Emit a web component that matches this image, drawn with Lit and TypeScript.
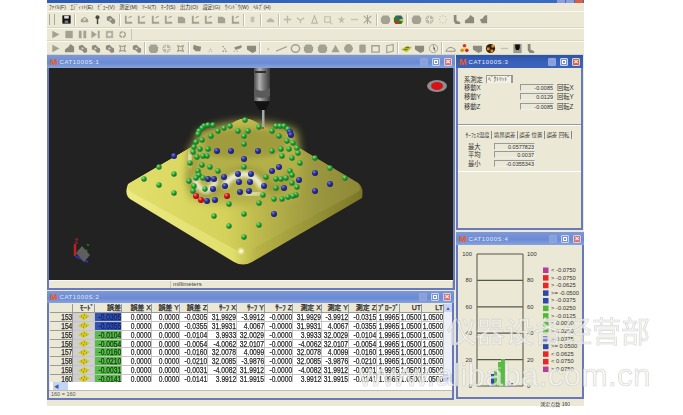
import { LitElement, html, css, svg, unsafeCSS } from "lit";
import { customElement } from "lit/decorators.js";

const UI = unsafeCSS(`"Liberation Sans", "Noto Sans CJK JP", sans-serif`);

const G = "#a3a191";
function icon(kind: string) {
  let s;
  switch (kind) {
    case "save": s = svg`<rect x="1.500" y="1.500" width="9" height="9" fill="#111"/><rect x="3.500" y="2" width="5" height="3" fill="#ddd"/><rect x="4" y="7" width="4" height="3" fill="#777"/>`; break;
    case "print": s = svg`<path d="M2 6l4-3 4 3v3H2z" fill="${G}"/><circle cx="6" cy="6" r="1.600" fill="#d8d6c8"/>`; break;
    case "key": s = svg`<circle cx="6" cy="3.500" r="2.200" fill="#4a4a40"/><rect x="5.200" y="5" width="1.600" height="6" fill="#4a4a40"/>`; break;
    case "tools": s = svg`<path d="M2 3l4-1 3 3 2 1v4l-3 1-3-3-3-1z" fill="#8e8c80"/><circle cx="6" cy="6" r="1.200" fill="#d8d6c8"/>`; break;
    case "L": s = svg`<path d="M3 2v7.500h7" fill="none" stroke="${G}" stroke-width="2"/><path d="M6 4l3.500-1.500" stroke="${G}" stroke-width="1.200"/>`; break;
    case "Lf": s = svg`<path d="M2 3h5l3 2v5H2z" fill="${G}"/>`; break;
    case "small": s = svg`<path d="M4 3h4v6H4z" fill="#c4c2b2"/>`; break;
    case "roof": s = svg`<path d="M2 7l4-3 4 3v2H2z" fill="#bab8a8"/>`; break;
    case "cross": s = svg`<path d="M6 2v8M2 6h8" stroke="#bab8a8" stroke-width="1.500"/>`; break;
    case "vee": s = svg`<path d="M2 4l4 3 4-3M6 7v3" stroke="#bab8a8" stroke-width="1.300" fill="none"/>`; break;
    case "tri": s = svg`<path d="M6 2l3 8H3z" fill="none" stroke="#bab8a8" stroke-width="1.300"/>`; break;
    case "sq": s = svg`<path d="M3 3h6v6H3z M8 8l3 3" fill="none" stroke="#c0beae" stroke-width="1.300"/>`; break;
    case "star": s = svg`<path d="M6 2l1 3h3l-2.500 2 1 3L6 8.500 3.500 10l1-3L2 5h3z" fill="#c0beae"/>`; break;
    case "dash": s = svg`<path d="M2 6h8" stroke="#c4c2b2" stroke-width="1.500"/>`; break;
    case "spark": s = svg`<path d="M2 2l8 8M10 2l-8 8M6 1v10" stroke="${G}" stroke-width="1.100"/>`; break;
    case "blob": s = svg`<path d="M3 1.500h6l2 3v4l-2 2.500H3L1 8.500v-4z" fill="${G}"/>`; break;
    case "cube": s = svg`<path d="M3 1.500h6l2 3v4l-2 2.500H3L1 8.500v-4z" fill="#2a7a30"/><path d="M6 1.500l5 3-5 2z" fill="#3050b0"/><path d="M1 8.500l5-2v4.500H3z" fill="#c03030"/><path d="M6 6.500l5-2v4z" fill="#d8c020"/>`; break;
    case "net": s = svg`<circle cx="6" cy="6" r="4.500" fill="#bab8a8"/><path d="M2 6h8M6 1.500v9M3 3l6 6" stroke="#ece9d8"/>`; break;
    case "dots": s = svg`<path d="M3 3h.8M6 2h.8M9 3h.8M2 6h.8M10 6h.8M3 9h.8M6 10h.8M9 9h.8" stroke="${G}"/>`; break;
    case "probe": s = svg`<path d="M3 1h3v6l4 2v2H5L3 8z" fill="#8c8a7c"/>`; break;
    case "mass": s = svg`<path d="M1 7l4-3 2-3 4 3v6H1z" fill="#8c8a7c"/>`; break;
    case "bird": s = svg`<path d="M2 6l3-1 2-3 3-1v9H4z" fill="#8c8a7c"/>`; break;
    case "play": s = svg`<path d="M2.500 2l8 4-8 4z" fill="${G}"/>`; break;
    case "stop": s = svg`<rect x="1.500" y="2" width="8" height="8" fill="${G}"/>`; break;
    case "pause": s = svg`<path d="M2 2h3v8H2zM7 2h3v8H7z" fill="${G}"/>`; break;
    case "next": s = svg`<path d="M1.500 2l6 4-6 4zM8.500 2h2v8h-2z" fill="${G}"/>`; break;
    case "disc": s = svg`<rect x="2" y="2" width="8" height="8" fill="#b4b2a2"/><circle cx="6" cy="6" r="2" fill="#ece9d8"/>`; break;
    case "ring": s = svg`<circle cx="6" cy="6" r="3" fill="none" stroke="${G}" stroke-width="1.500" stroke-dasharray="4 1"/>`; break;
    case "pts": s = svg`<path d="M3 3l3 1 3-1-1 3 1 3-3-1-3 1 1-3z" fill="none" stroke="${G}" stroke-width="1.300"/>`; break;
    case "wave": s = svg`<path d="M2 2l3 1 5 1-1 5H4l-3-3z" fill="#8c8a7c"/>`; break;
    case "wee": s = svg`<path d="M4 9h.8M7 9h.8M5.500 7h.8" stroke="#8c8a7c" stroke-width="1.200"/>`; break;
    case "wee2": s = svg`<path d="M4 4h1M4 9h1M7 9h1M6 6.500h1" stroke="#6c6a5c" stroke-width="1.400"/>`; break;
    case "wee3": s = svg`<path d="M2 9h1M5 9h1M3 5l7-2v2l-6 2z" fill="#8c8a7c" stroke="#8c8a7c"/>`; break;
    case "flag": s = svg`<path d="M1 3h10v6l-4 2-6-4z" fill="#8c8a7c"/>`; break;
    case "dot": s = svg`<rect x="5" y="6" width="1.500" height="1.500" fill="${G}"/>`; break;
    case "line": s = svg`<path d="M0 9L12 4" stroke="${G}" stroke-width="1.300"/>`; break;
    case "circ": s = svg`<ellipse cx="6" cy="6" rx="4.500" ry="4" fill="none" stroke="${G}" stroke-width="1.600"/>`; break;
    case "cone": s = svg`<path d="M6 2l4.500 8h-9z" fill="${G}"/>`; break;
    case "ball": s = svg`<circle cx="6" cy="6" r="4.800" fill="${G}"/>`; break;
    case "can": s = svg`<rect x="2.500" y="1.500" width="7" height="9" rx="1.500" fill="${G}"/>`; break;
    case "box": s = svg`<path d="M2 3h8v7H2z" fill="none" stroke="${G}" stroke-width="1.500"/>`; break;
    case "skew": s = svg`<path d="M3 3l7-1.500v7.500l-7 1.500z" fill="none" stroke="${G}" stroke-width="1.300"/>`; break;
    case "yel": s = svg`<path d="M0 7l7-4 5 2-6 5z" fill="#c4c030"/><path d="M3 7h4M5 5h4" stroke="#4a6a20"/>`; break;
    case "clock": s = svg`<circle cx="6" cy="6" r="4.500" fill="none" stroke="${G}"/><path d="M6 2v4l2 3" stroke="${G}"/>`; break;
    case "arc": s = svg`<path d="M1 9c2-5 6-5 10-2v2z" fill="none" stroke="#8c8a7c"/>`; break;
    case "fl": s = svg`<circle cx="6" cy="3" r="2" fill="#d83818"/><circle cx="3.500" cy="8" r="2" fill="#d89018"/><circle cx="8.500" cy="8" r="2" fill="#c83018"/><circle cx="6" cy="6" r="1.300" fill="#e8d040"/>`; break;
    case "chess": s = svg`<circle cx="6" cy="6" r="5" fill="#2a1c10"/><path d="M2 5h3v3H2zM7 2h3v3H7zM6 7h3v3H6z" fill="#e08a20"/>`; break;
    case "black": s = svg`<rect x="1.500" y="1" width="9" height="10" fill="#9a9888"/><path d="M3.500 1.500h5v4l-1 2h-3l-1-2z" fill="#111"/>`; break;
    default: s = svg``;
  }
  return html`<svg class="ic" viewBox="0 0 12 12">${s}</svg>`;
}

const ROW1 = "save | print key tools | L L L L Lf L L Lf L | small | roof | cross vee tri sq star dash spark | blob cube | blob net dots probe mass bird".split(" ");
const ROW2 = "play stop pause next disc ring".split(" ");
const ROW3 = "play mass tools tools tools pts tools | blob net pts | wave wee wee2 wee3 flag | dot line circ blob blob cone ball can box skew | yel flag clock | arc fl flag chess dash black probe".split(" ");

const MENU = ["ﾌｧｲﾙ(F)", "ｴﾃﾞｨｯﾄ(E)", "ﾋﾞｭｰ(V)", "測定(M)", "ﾂｰﾙ(T)", "ﾏｰｸ(S)", "出力(O)", "設定(G)", "ｳｲﾝﾄﾞｳ(W)", "ﾍﾙﾌﾟ(H)"];

const HEAD = ["", "ﾓｰﾄﾞ", "誤差", "誤差 X", "誤差 Y", "誤差 Z", "ｻｰﾌ X", "ｻｰﾌ Y", "ｻｰﾌ Z", "測定 X", "測定 Y", "測定 Z", "ﾌﾟﾛｰﾌﾞ", "UT", "LT"];
const ROWS: string[][] = [
  ["153", "-0.0305", "31.9929", "-3.9912"],
  ["154", "-0.0355", "31.9931", "4.0067"],
  ["155", "-0.0104", "3.9933", "32.0029"],
  ["156", "-0.0054", "-4.0062", "32.0107"],
  ["157", "-0.0160", "32.0078", "4.0099"],
  ["158", "-0.0210", "32.0085", "-3.9876"],
  ["159", "-0.0031", "-4.0082", "31.9912"],
  ["160", "-0.0141", "3.9912", "31.9915"],
];

const GREEN: number[][] = [[245,120],[204,126],[208,125],[213,125],[202,128],[199,131],[198,134],[230,126],[224,128],[218,131],[211,136],[202,140],[196,142],[194,147],[193,152],[200,149],[208,149],[197,157],[207,156],[203,156],[190,163],[202,165],[210,167],[198,171],[218,171],[199,175],[196,178],[189,181],[203,178],[194,186],[193,191],[205,189],[159,167],[174,174],[144,179],[159,185],[174,193],[259,127],[238,131],[248,131],[272,131],[276,126],[280,126],[284,126],[288,129],[279,136],[244,136],[244,144],[287,141],[293,143],[289,149],[297,148],[281,149],[272,151],[298,153],[282,156],[292,158],[300,163],[315,158],[330,168],[290,171],[292,175],[286,178],[281,179],[276,179],[266,177],[244,167],[292,183],[297,187],[276,188],[296,195],[293,196],[288,197],[282,199],[274,199],[263,195],[259,203],[229,204],[214,216],[244,214],[229,226],[259,225],[244,237],[345,178]];
const BLUE: number[][] = [[290,132],[291,135],[217,151],[231,151],[258,151],[174,156],[244,159],[279,167],[272,171],[315,173],[299,180],[330,184],[315,191],[208,179],[214,179],[224,177],[238,174],[251,174],[239,182],[250,182],[225,186],[213,189],[264,186],[284,188],[240,192],[249,191],[207,201],[215,200],[274,214]];
const RED: number[][] = [[196,196],[201,200],[227,196]];

const LEG: [string, string][] = [
  ["#b83c98", "< -0.0750"], ["#e82828", "> -0.0750"], ["#e82828", "> -0.0625"], ["#2c48a8", ">= -0.0500"],
  ["#2c48a8", "> -0.0375"], ["#50b838", "> -0.0250"], ["#50b838", "> -0.0125"], ["#50b838", "> 0.0000"],
  ["#50b838", "> 0.0250"], ["#7080c8", "> 0.0375"], ["#2c48a8", ">= 0.0500"], ["#e82828", "< 0.0625"],
  ["#e82828", "< 0.0750"], ["#b83c98", "> 0.0750"],
];

@customElement("app-root")
export class AppRoot extends LitElement {
  static styles = css`
    :host { display: block; width: 683px; height: 415px; background: #fff; overflow: hidden; position: relative; font-family: ${UI}; }
    .app { margin-left: 47px; width: 537px; height: 406px; background: #ebe8d6; display: flex; flex-direction: column; filter: blur(0.35px); position: relative; }
    .top { height: 3px; background: linear-gradient(90deg, #2c5cb4, #3a6cc8); flex: none; display: flex; justify-content: flex-end; gap: 1px; padding-right: 1px; }
    .top i { width: 8px; height: 3px; background: #8aa0dc; }
    .top i:last-child { background: #d86040; }
    .menu { height: 8px; box-sizing: border-box; flex: none; display: flex; gap: 4.500px; padding-left: 2px; font-size: 5.200px; line-height: 8px; color: #333; white-space: nowrap; }
    .tb { flex: none; box-sizing: border-box; display: flex; align-items: center; border-bottom: 1px solid #d8d5c2; border-top: 1px solid #faf8f0; }
    .tb1 { height: 17px; padding-left: 2px; }
    .tb2 { height: 13px; padding-left: 2px; }
    .tb3 { height: 14px; padding-left: 2px; }
    .grip { width: 4px; height: 11px; border-left: 1px solid #aaa898; border-right: 1px solid #aaa898; margin-right: 5px; flex: none; }
    .slot { width: 13.400px; flex: none; display: flex; justify-content: center; }
    .ic { width: 11px; height: 11px; display: block; }
    .sep { width: 0; height: 12px; border-left: 1px solid #c0bdaa; border-right: 1px solid #fff; margin: 0 1px 0 1px; flex: none; }
    .band2 { width: 82px; display: flex; align-items: center; border-right: 1px solid #c8c5b2; height: 100%; }
    .mdi { flex: 1; position: relative; }

    .win { position: absolute; box-sizing: border-box; border: 2px solid #6878bc; border-top: 0; display: flex; flex-direction: column; background: #ebe8d6; }
    .w1 { left: 0; top: 0; width: 408px; height: 235px; }
    .w2 { left: 0; top: 236px; width: 407px; height: 109px; }
    .w3 { left: 409px; top: 0; width: 127px; height: 175px; }
    .w4 { left: 409px; top: 177px; width: 128px; height: 167px; }
    .title { height: 13px; flex: none; margin: 0 -2px; display: flex; align-items: center; gap: 2px; padding: 0 3px; background: linear-gradient(180deg, #7c98d8, #6a8ad4 60%, #89a4dc); }
    .w2 .title { height: 12px; }
    .active .title { background: linear-gradient(180deg, #2c54a8, #3a62bc 60%, #3c62b4); }
    .m { color: #ec5a20; font-weight: 700; font-size: 9px; line-height: 12px; }
    .name { color: #e8ecf8; font-size: 6px; letter-spacing: 0.6px; flex: 1; white-space: nowrap; }
    .btn { width: 8px; height: 8px; box-sizing: border-box; border: 1px solid #c8d4f0; border-radius: 1px; background: #7a94d8; flex: none; margin-left: 2px; position: relative; }
    .btn.min { background: #88a0dc; border-color: #90a6de; }
    .btn.max::after { content: ""; position: absolute; inset: 1px; border: 1px solid #fff; border-top-width: 1.500px; }
    .btn.x { background: #d87070; }
    .active .btn.x { background: #e06030; }
    .btn.x::after { content: "×"; position: absolute; inset: -2px 0 0 0; color: #fff; font: 700 8px/9px ${UI}; text-align: center; }

    .view { flex: 1; background: #212221; display: block; min-height: 0; }
    .view svg { display: block; width: 100%; height: 100%; }
    .stat { height: 8px; box-sizing: border-box; flex: none; display: flex; border-top: 1px solid #f8f6ee; font-size: 6px; line-height: 7px; color: #444; }
    .stat span { border-right: 1px solid #c8c5b2; box-sizing: border-box; }
    .s1 { width: 122px; }
    .s2 { flex: 1; padding-left: 2px; }

    .tablewrap { flex: none; height: 78px; display: flex; background: #fff; margin: 1px 0 0 1px; }
    .table { width: 394px; overflow: hidden; flex: none; }
    .row { display: grid; grid-template-columns: 23px 22px 27px 30px 28px 28px 29px 28px 28px 29px 27px 28px 23px 22px 22px; height: 8.860px; }
    .hrow { height: 9px; }
    .cell { box-sizing: border-box; border-right: 1px solid #c4c4c4; border-bottom: 1px solid #c4c4c4; font-size: 8.600px; line-height: 8px; color: #262626; display: flex; justify-content: flex-end; overflow: hidden; white-space: nowrap; }
    .cell b { display: block; flex: none; font-weight: 400; -webkit-text-stroke: 0.25px currentColor; transform: scaleX(0.78); transform-origin: right center; }
    .head { background: #ebe8d6; border-right-color: #999; border-bottom-color: #999; }
    .hrow .cell { font-size: 7px; }
    .hrow .cell b { transform: none; }
    .mode { background: #cfcfcf; justify-content: center; align-items: center; }
    .mode svg { width: 12px; height: 7px; }
    .blue { background: #3453b0; color: #10206a; }
    .grn { background: #58bb4a; color: #123a10; }
    .vs { flex: 1; background: #edf0f8; display: flex; flex-direction: column; justify-content: space-between; }
    .arrow { height: 8px; background: #c4d4f4; color: #3c5a9c; font-size: 5px; line-height: 8px; text-align: center; }
    .hs { height: 8px; flex: none; background: #fff; margin-left: 1px; display: flex; }
    .hs .arrow { width: 7px; margin-left: 3px; }
    .hs .th { width: 8px; background: #c4d4f4; }
    .st2 { height: 8px; box-sizing: border-box; flex: none; font-size: 5.500px; line-height: 7px; color: #555; padding-left: 2px; border-top: 1px solid #bbb; }

    .pane { flex: 1; display: flex; flex-direction: column; padding: 7px 2px 0 6px; font-size: 6.300px; color: #333; }
    .sys { display: flex; align-items: center; gap: 3px; height: 8px; }
    .tab { border: 1px solid #999; border-bottom: 0; border-right-width: 2px; padding: 0 1px; background: #f4f2e8; line-height: 7px; font-size: 5.500px; }
    .f { display: flex; align-items: center; height: 9.300px; }
    .f label { width: 56px; flex: none; }
    .box { width: 34px; height: 7px; box-sizing: border-box; background: #ebe8d6; border: 1px solid #999; border-right-color: #eee; border-bottom-color: #eee; text-align: right; line-height: 6px; font-size: 5.500px; flex: none; }
    .f em { font-style: normal; margin-left: 3px; white-space: nowrap; }
    .rule { margin: 13px -2px 0 -6px; border-top: 1px solid #999; border-bottom: 1px solid #fff; height: 0; flex: none; }
    .tabs { display: flex; margin: 5px 0 3px; white-space: nowrap; font-size: 5.400px; line-height: 8px; }
    .tabs span { padding: 0 1.500px; border-right: 1px solid #888; }
    .g label { width: 30px; padding-left: 4px; box-sizing: border-box; }
    .g .box { width: 41px; }
    .g { height: 8.700px; }
    .rule2 { margin: 3px -2px 0 -6px; border-top: 1px solid #fff; flex: none; }

    .chart { flex: 1; min-height: 0; }
    .chart svg { display: block; width: 100%; height: 100%; }
    .chart text { font-family: ${UI}; font-size: 5.800px; fill: #333; }

    .bot { position: absolute; right: 14px; bottom: 0; height: 4px; line-height: 4px; font-size: 5px; color: #444; white-space: nowrap; }

    .wm { position: absolute; left: 0; top: 0; width: 683px; height: 415px; pointer-events: none; overflow: hidden; filter: blur(0.4px); }
    .wm span { position: absolute; white-space: nowrap; color: rgba(244, 244, 240, 0.72); -webkit-text-stroke: 0.6px rgba(196, 196, 196, 0.7); }
    .wm1 { left: 447px; top: 312px; font: 29px/36px "Noto Sans CJK SC", sans-serif; }
    .wm2 { left: 359px; top: 357px; font: 32px/36px "Liberation Sans", sans-serif; }
  `;

  private tools(list: string[]) {
    return list.map((k) => (k === "|" ? html`<div class="sep"></div>` : html`<div class="slot">${icon(k)}</div>`));
  }

  private win(cls: string, n: number, body: unknown) {
    return html`<section class="win ${cls}">
      <div class="title"><span class="m">M</span><span class="name">CAT1000S:${n}</span><i class="btn min"></i><i class="btn max"></i><i class="btn x"></i></div>
      ${body}
    </section>`;
  }

  private scene() {
    const dots = (a: number[][], f: string, r: number) => a.map(([x, y]) => svg`<circle cx=${x} cy=${y} r=${r} fill=${f}/>`);
    return html`<svg viewBox="49 68 404 212" preserveAspectRatio="none">
      <defs>
        <linearGradient id="top" x1="0" x2="1" y1="0" y2="0">
          <stop offset="0" stop-color="#e2e06c"/><stop offset=".42" stop-color="#d4d25a"/><stop offset=".6" stop-color="#b8b44a"/><stop offset=".8" stop-color="#9c9840"/><stop offset="1" stop-color="#8c8836"/>
        </linearGradient>
        <linearGradient id="side" x1="0" x2="1" y1="0" y2="0">
          <stop offset="0" stop-color="#ecea82"/><stop offset=".45" stop-color="#e0de6c"/><stop offset=".55" stop-color="#b8b448"/><stop offset="1" stop-color="#7a7628"/>
        </linearGradient>
        <radialGradient id="gg" cx=".35" cy=".3" r=".8"><stop offset="0" stop-color="#9ce88c"/><stop offset=".4" stop-color="#28a838"/><stop offset="1" stop-color="#0a5a22"/></radialGradient>
        <radialGradient id="bb" cx=".35" cy=".3" r=".8"><stop offset="0" stop-color="#7c84e0"/><stop offset=".4" stop-color="#2a32a0"/><stop offset="1" stop-color="#10145c"/></radialGradient>
        <radialGradient id="rr" cx=".35" cy=".3" r=".8"><stop offset="0" stop-color="#ff9090"/><stop offset=".4" stop-color="#e01020"/><stop offset="1" stop-color="#7a0810"/></radialGradient>
        <linearGradient id="pr" x1="0" x2="1" y1="0" y2="0"><stop offset="0" stop-color="#4c4c4c"/><stop offset=".35" stop-color="#b0b0b0"/><stop offset=".6" stop-color="#7c7c7c"/><stop offset="1" stop-color="#3a3a3a"/></linearGradient>
        <filter id="b1" x="-30%" y="-30%" width="160%" height="160%"><feGaussianBlur stdDeviation="1.200"/></filter>
        <filter id="b2" x="-30%" y="-30%" width="160%" height="160%"><feGaussianBlur stdDeviation="2"/></filter>
        <filter id="b4" x="-30%" y="-30%" width="160%" height="160%"><feGaussianBlur stdDeviation="4"/></filter>
      </defs>
      <path d="M236 121 Q245 116 254 121 L358 183 Q364 187 362 198 L252 262 Q243 267 234 262 L130 199 Q124 194 128 184 Z" fill="url(#side)"/>
      <path d="M236 121 Q245 116 254 121 L358 183 Q362 188 358 192 L250 250 Q243 253 236 250 L131 192 Q125 188 130 183 Z" fill="url(#top)"/>
      <circle cx="241" cy="251" r="2.500" fill="#fffde0" filter="url(#b1)"/>
      <path d="M198 132 Q245 112 296 130 Q304 165 296 196 Q250 212 190 198 Q186 165 198 132 Z" fill="#b4b048" filter="url(#b4)"/>
      <path d="M204 134 Q245 124 286 134 Q288 150 272 156 Q240 160 212 156 Q202 150 204 134 Z" fill="#a09c3c" filter="url(#b2)"/>
      <path d="M193 146 Q192 168 190 180 Q196 198 214 192 Q226 176 240 172 Q262 170 272 190 Q284 192 290 172" fill="none" stroke="#8f8c34" stroke-width="6" filter="url(#b4)"/>
      <path d="M191 152 Q188 160 190 166" fill="none" stroke="#fdfce0" stroke-width="3.500" filter="url(#b2)"/>
      <path d="M195 178 Q197 190 207 191 Q213 187 217 180" fill="none" stroke="#fffff0" stroke-width="4.500" filter="url(#b2)"/>
      <path d="M224 187 Q229 175 245 174 Q256 175 262 188" fill="none" stroke="#fffff0" stroke-width="5" filter="url(#b2)"/>
      <path d="M245 195 Q254 193 261 193" fill="none" stroke="#fffff0" stroke-width="3" filter="url(#b2)"/>
      ${dots(GREEN, "url(#gg)", 2.7)}${dots(BLUE, "url(#bb)", 3)}${dots(RED, "url(#rr)", 3)}
      <rect x="262" y="108" width="2.500" height="20" fill="#a8a8a8"/>
      <circle cx="263" cy="128" r="1" fill="#e02020"/>
      <rect x="254" y="68" width="16" height="33" fill="url(#pr)"/>
      <path d="M254 88 Q262 94 270 88 V96 Q262 100 254 96 Z" fill="#5a5a5a"/>
      <path d="M254 101 Q262 104 270 101 L266 110 H259 Z" fill="#121212"/>
      <rect x="255" y="71" width="11" height="2" fill="#2e2e2e"/>
      <ellipse cx="437" cy="86" rx="10" ry="6" fill="#8e8e8e"/>
      <ellipse cx="437" cy="86" rx="6" ry="4" fill="#d81018"/>
      <path d="M75 244V256" stroke="#c02020" stroke-width="2.500"/>
      <path d="M75 256L88 262" stroke="#2a30a0" stroke-width="2"/>
      <path d="M82 255L87 250" stroke="#1c8a30" stroke-width="2"/>
      <path d="M82 246L90 255 84 262 76 253Z" fill="#5e5e5e"/>
      <path d="M75 239h3l-3 4h3" fill="none" stroke="#b02020"/>
      <path d="M87 244l1 2 1-2" fill="none" stroke="#2a7a30"/>
    </svg>`;
  }

  private modeIcon() {
    return html`<svg viewBox="0 0 12 7"><path d="M0 4l6-4 6 3-6 4z" fill="#d8c820"/><path d="M3 3h1M6 2h1M8 4h1" stroke="#3a9a30"/><path d="M5 5h1" stroke="#d04020"/></svg>`;
  }

  private table() {
    return html`<div class="table">
      <div class="row hrow">${HEAD.map((h) => html`<div class="cell head"><b>${h}</b></div>`)}</div>
      ${ROWS.map(([n, e, x, y], i) => {
        const vals = ["0.0000", "0.0000", e, x, y, "-0.0000", x, y, e === "-0.0305" ? "-0.0315" : e, "1.9965", "1.0500", "1.0500"];
        return html`<div class="row">
          <div class="cell head"><b>${n}</b></div>
          <div class="cell mode">${this.modeIcon()}</div>
          <div class="cell ${i < 2 ? "blue" : "grn"}"><b>${e}</b></div>
          ${vals.map((v) => html`<div class="cell"><b>${v}</b></div>`)}
        </div>`;
      })}
    </div>`;
  }

  private chart() {
    const ys = [0, 1, 2, 3, 4, 5].map((i) => 9 + i * 26.4);
    const labels = ["100", "80", "60", "40", "20", "0"];
    const bars: [number, number, number, string][] = [
      [30, 1, 1, "#2c48a8"], [33, 3, 12, "#2c48a8"], [36, 3, 16, "#58bc44"], [40, 3, 24, "#58bc44"], [43, 4, 27, "#58bc44"], [48, 4, 5, "#b8c4e4"], [53, 2, 3, "#2c48a8"], [55, 3, 1, "#e82828"],
    ];
    return html`<div class="chart"><svg viewBox="0 0 124 152">
      ${ys.map((y, i) => svg`
        <path d="M19 ${y}H65" stroke="#555548" stroke-width="1.200"/>
        <text x="14" y=${y + 2} text-anchor="end">${labels[i]}</text>
        <text x="69" y=${y + 2}>${labels[i]}</text>`)}
      <path d="M19 9V141M65 9V141" stroke="#6c6c5e" stroke-width="1.200"/>
      ${bars.map(([x, w, h, c]) => svg`<rect x=${x} y=${141 - h} width=${w} height=${h} fill=${c}/>`)}
      <path d="M40 123h3M40 129h3M33 133h3M36 131h3" stroke="#fff" stroke-width=".6"/>
      ${LEG.map(([c, t], i) => {
        const y = 25 + i * 7.62;
        return svg`<rect x="85" y=${y - 2.500} width="5.500" height="5.500" fill=${c}/><text x="93" y=${y + 2}>${t}</text>`;
      })}
    </svg></div>`;
  }

  private pane() {
    const f = (a: string, v: string, b: string) => html`<div class="f"><label>${a}</label><span class="box">${v}</span><em>${b}</em></div>`;
    const g = (a: string, v: string) => html`<div class="f g"><label>${a}</label><span class="box">${v}</span></div>`;
    return html`<div class="pane">
      <div class="sys"><span>系測定</span><span class="tab">ﾍﾞｸﾄﾘｯﾄﾞ</span></div>
      ${f("移動X", "-0.0085", "回転X")}${f("移動Y", "0.0129", "回転Y")}${f("移動Z", "-0.0085", "回転Z")}
      <div class="rule"></div>
      <div class="tabs"><span>ｻｰﾌｪｽ温度</span><span>境界誤差</span><span>誤差 位置</span><span>誤差 回転</span></div>
      ${g("最大", "0.0577823")}${g("平均", "0.0037")}${g("最小", "-0.0355343")}
      <div class="rule2"></div>
    </div>`;
  }

  render() {
    return html`
      <div class="app">
        <div class="top"><i></i><i></i><i></i></div>
        <div class="menu">${MENU.map((m) => html`<span>${m}</span>`)}</div>
        <div class="tb tb1"><div class="grip"></div>${this.tools(ROW1)}</div>
        <div class="tb tb2"><div class="band2">${this.tools(ROW2)}</div></div>
        <div class="tb tb3">${this.tools(ROW3)}</div>
        <div class="mdi">
          ${this.win("w1", 1, html`<div class="view">${this.scene()}</div>
            <div class="stat"><span class="s1"></span><span class="s2">millimeters</span></div>`)}
          ${this.win("w2", 2, html`<div class="tablewrap">${this.table()}<div class="vs"><div class="arrow">▲</div><div class="arrow">▼</div></div></div>
            <div class="hs"><div class="arrow">◀</div><div class="th"></div></div>
            <div class="st2">160 = 160</div>`)}
          ${this.win("w3 active", 3, this.pane())}
          ${this.win("w4", 4, this.chart())}
        </div>
        <div class="bot">測定点数 160</div>
      </div>
      <div class="wm" aria-hidden="true">
        <span class="wm1">仪器设备经营部</span>
        <span class="wm2">www.alibaba.com.cn</span>
      </div>
    `;
  }
}
